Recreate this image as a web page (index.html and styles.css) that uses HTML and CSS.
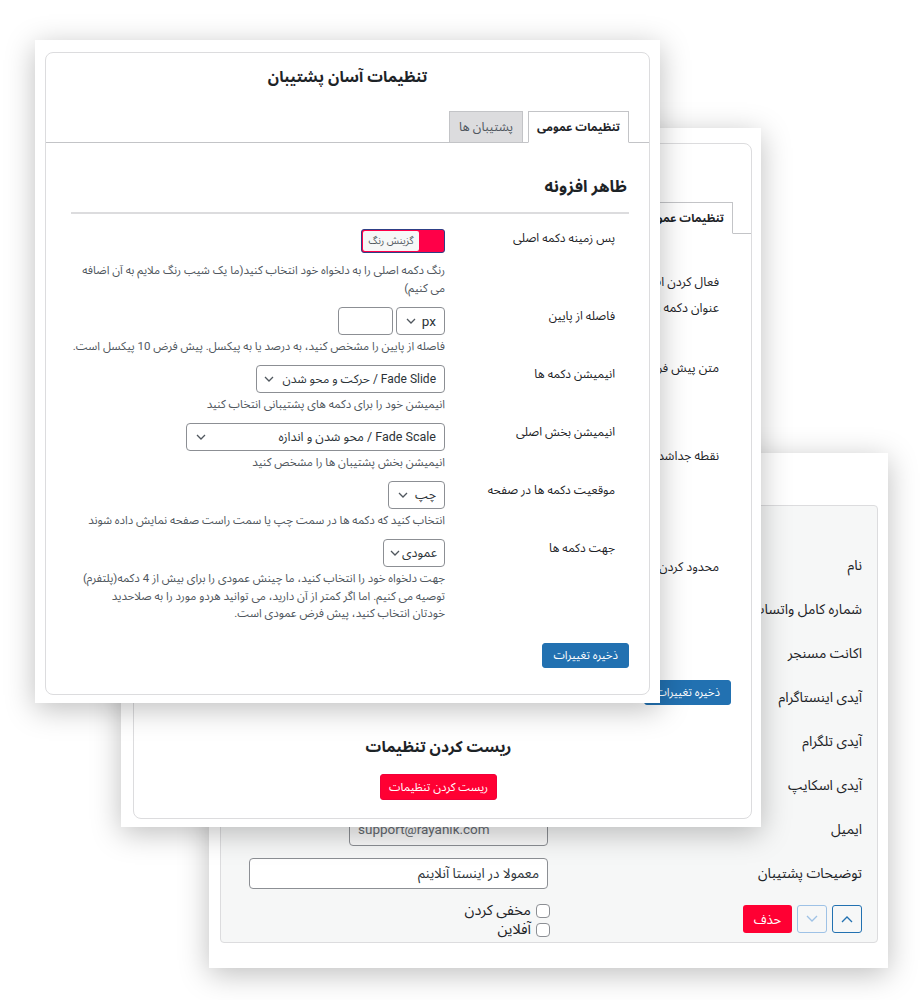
FILE: index.html
```html
<!DOCTYPE html>
<html lang="fa" dir="rtl">
<head>
<meta charset="utf-8">
<title>تنظیمات آسان پشتیبان</title>
<link rel="stylesheet" href="styles.css">
</head>
<body>
<div class="canvas">

  <!-- Window 3: supporters list -->
  <section class="win win3">
    <div class="w3-box">
      <div class="w3-row"><div class="w3-lbl">نام</div><div><input class="w3-in" type="text" value="پشتیبان فروش"></div></div>
      <div class="w3-row"><div class="w3-lbl">شماره کامل واتساپ</div><div><input class="w3-in ltr" type="text" value="989120000000"></div></div>
      <div class="w3-row"><div class="w3-lbl">اکانت مسنجر</div><div><input class="w3-in ltr" type="text" value=""></div></div>
      <div class="w3-row"><div class="w3-lbl">آیدی اینستاگرام</div><div><input class="w3-in ltr" type="text" value="rayanik"></div></div>
      <div class="w3-row"><div class="w3-lbl">آیدی تلگرام</div><div><input class="w3-in ltr" type="text" value="rayanik"></div></div>
      <div class="w3-row"><div class="w3-lbl">آیدی اسکایپ</div><div><input class="w3-in ltr" type="text" value=""></div></div>
      <div class="w3-row"><div class="w3-lbl">ایمیل</div><div><input class="w3-in ltr email" type="text" value="support@rayanik.com"></div></div>
      <div class="w3-row"><div class="w3-lbl">توضیحات پشتیبان</div><div><input class="w3-in wide" type="text" value="معمولا در اینستا آنلاینم"></div></div>
      <div class="w3-last">
        <div class="w3-btns">
          <button class="ibtn up" type="button" aria-label="بالا"><svg width="12" height="8" viewBox="0 0 12 8"><path d="M1 7l5-5 5 5" fill="none" stroke="#2271b1" stroke-width="1.3"/></svg></button>
          <button class="ibtn down" type="button" aria-label="پایین"><svg width="12" height="8" viewBox="0 0 12 8"><path d="M1 1l5 5 5-5" fill="none" stroke="#9ec2e6" stroke-width="1.3"/></svg></button>
          <button class="del" type="button">حذف</button>
        </div>
        <div class="w3-checks">
          <label class="chk"><input type="checkbox"><span>مخفی کردن</span></label>
          <label class="chk"><input type="checkbox"><span>آفلاین</span></label>
        </div>
      </div>
    </div>
  </section>

  <!-- Window 2: general settings + reset -->
  <section class="win win2">
    <div class="box">
      <h1 class="title">تنظیمات آسان پشتیبان</h1>
      <div class="tabs tabs2">
        <div class="tab active">تنظیمات عمومی</div>
        <div class="tab">پشتیبان ها</div>
      </div>
      <div class="w2-form">
        <div class="w2-row h26">فعال کردن افزونه</div>
        <div class="w2-row h60">عنوان دکمه اصلی</div>
        <div class="w2-row h88">متن پیش فرض پیام</div>
        <div class="w2-row h111">نقطه جداشدن موبایل</div>
        <div class="w2-row h122">محدود کردن نمایش</div>
      </div>
      <div class="w2-save"><button class="btn-primary" type="button">ذخیره تغییرات</button></div>
      <div class="reset">
        <h3 class="reset-title">ریست کردن تنظیمات</h3>
        <button class="btn-red" type="button">ریست کردن تنظیمات</button>
      </div>
    </div>
  </section>

  <!-- Window 1: appearance -->
  <section class="win win1">
    <div class="box">
      <h1 class="title">تنظیمات آسان پشتیبان</h1>
      <div class="tabs">
        <div class="tab active">تنظیمات عمومی</div>
        <div class="tab">پشتیبان ها</div>
      </div>
      <div class="body1">
        <h2 class="section">ظاهر افزونه</h2>
        <hr class="sep">

        <div class="row">
          <div class="lbl">پس زمینه دکمه اصلی</div>
          <div class="field">
            <div class="picker"><span>گزینش رنگ</span></div>
            <div class="desc first">رنگ دکمه اصلی را به دلخواه خود انتخاب کنید(ما یک شیب رنگ ملایم به آن اضافه<br>می کنیم)</div>
          </div>
        </div>

        <div class="row">
          <div class="lbl">فاصله از پایین</div>
          <div class="field">
            <div class="inline">
              <div class="sel w49"><span class="ltr-txt">px</span><svg class="chev" width="10" height="6" viewBox="0 0 10 6"><path d="M1 1l4 4 4-4" fill="none" stroke="#50575e" stroke-width="1.3"/></svg></div>
              <input class="num" type="text" value="">
            </div>
            <div class="desc">فاصله از پایین را مشخص کنید، به درصد یا به پیکسل. پیش فرض 10 پیکسل است.</div>
          </div>
        </div>

        <div class="row">
          <div class="lbl">انیمیشن دکمه ها</div>
          <div class="field">
            <div class="sel w189 snug"><span>Fade Slide / حرکت و محو شدن</span><svg class="chev" width="10" height="6" viewBox="0 0 10 6"><path d="M1 1l4 4 4-4" fill="none" stroke="#50575e" stroke-width="1.3"/></svg></div>
            <div class="desc">انیمیشن خود را برای دکمه های پشتیبانی انتخاب کنید</div>
          </div>
        </div>

        <div class="row">
          <div class="lbl">انیمیشن بخش اصلی</div>
          <div class="field">
            <div class="sel w259"><span>Fade Scale / محو شدن و اندازه</span><svg class="chev" width="10" height="6" viewBox="0 0 10 6"><path d="M1 1l4 4 4-4" fill="none" stroke="#50575e" stroke-width="1.3"/></svg></div>
            <div class="desc">انیمیشن بخش پشتیبان ها را مشخص کنید</div>
          </div>
        </div>

        <div class="row">
          <div class="lbl">موقعیت دکمه ها در صفحه</div>
          <div class="field">
            <div class="sel w57"><span>چپ</span><svg class="chev" width="10" height="6" viewBox="0 0 10 6"><path d="M1 1l4 4 4-4" fill="none" stroke="#50575e" stroke-width="1.3"/></svg></div>
            <div class="desc">انتخاب کنید که دکمه ها در سمت چپ یا سمت راست صفحه نمایش داده شوند</div>
          </div>
        </div>

        <div class="row">
          <div class="lbl">جهت دکمه ها</div>
          <div class="field">
            <div class="sel w62 tight"><span>عمودی</span><svg class="chev" width="10" height="6" viewBox="0 0 10 6"><path d="M1 1l4 4 4-4" fill="none" stroke="#50575e" stroke-width="1.3"/></svg></div>
            <div class="desc multi">جهت دلخواه خود را انتخاب کنید، ما چینش عمودی را برای بیش از 4 دکمه(پلتفرم)<br>توصیه می کنیم. اما اگر کمتر از آن دارید، می توانید هردو مورد را به صلاحدید<br>خودتان انتخاب کنید، پیش فرض عمودی است.</div>
          </div>
        </div>

        <div class="save1"><button class="btn-primary" type="button">ذخیره تغییرات</button></div>
      </div>
    </div>
  </section>

</div>
</body>
</html>
```

FILE: styles.css
```css
* { box-sizing: border-box; }

body {
  margin: 0;
  background: #ffffff;
  font-family: Roboto, "Noto Sans Arabic", "DejaVu Sans", sans-serif;
  color: #1d2327;
}

.canvas {
  position: relative;
  width: 920px;
  height: 1000px;
  overflow: hidden;
  direction: rtl;
}

/* Free-floating screenshot windows */
.win {
  position: absolute;
  background: #ffffff;
  box-shadow: 0 6px 28px rgba(0, 0, 0, 0.26);
}

.win1 { left: 35px; top: 40px; width: 625px; height: 663px; padding: 12px 10px 8px 10px; }
.win2 { left: 121px; top: 128px; width: 640px; height: 699px; padding: 15px 9px 8px 12px; }
.win3 { left: 209px; top: 453px; width: 679px; height: 515px; padding: 52px 10px 25px 11px; }

.box {
  height: 100%;
  border: 1px solid #dcdcde;
  border-radius: 8px;
}

.title {
  margin: 0;
  padding-top: 12px;
  text-align: center;
  font-size: 15.5px;
  line-height: 24px;
  font-weight: 700;
  color: #1d2327;
}

/* Tabs */
.tabs {
  display: flex;
  align-items: flex-end;
  gap: 5px;
  margin-top: 22px;
  padding-right: 20px;
  border-bottom: 1px solid #c3c4c7;
}
.tabs2 { padding-right: 18px; }

.tab {
  height: 32px;
  margin-bottom: -1px;
  padding: 0 9px;
  border: 1px solid #c3c4c7;
  background: #dcdcde;
  color: #50575e;
  font-size: 12.5px;
  line-height: 30px;
  font-weight: 400;
}
.tab.active {
  padding: 0 8px;
  background: #ffffff;
  border-bottom-color: #ffffff;
  color: #1d2327;
  font-size: 11.5px;
  font-weight: 700;
}

/* Window 1 body */
.body1 { padding: 0 20px 0 25px; }

.section {
  margin: 31px 0 0;
  padding-right: 2px;
  font-size: 16.5px;
  line-height: 26px;
  font-weight: 700;
}

.sep {
  border: 0;
  height: 2px;
  background: #dcdcde;
  margin: 12px 0 15px;
}

.row {
  display: grid;
  grid-template-columns: 184px 1fr;
  margin-bottom: 10px;
}
.lbl {
  padding-right: 14px;
  font-size: 12px;
  line-height: 18px;
  color: #1d2327;
}
.field { min-width: 0; }

.desc {
  margin-top: 2px;
  font-size: 11.5px;
  line-height: 18px;
  color: #50575e;
  white-space: nowrap;
}
.desc.first { margin-top: 8px; }
.desc.multi { margin-top: 3px; line-height: 17.5px; }

.picker {
  display: flex;
  justify-content: flex-end;
  width: 84px;
  height: 24px;
  border: 1px solid #2e3f86;
  border-radius: 3px;
  background: #ff0048;
  padding: 1px;
}
.picker span {
  width: 56px;
  background: #f6f7f7;
  border-radius: 2px;
  font-size: 10px;
  line-height: 20px;
  text-align: center;
  color: #50575e;
}

.inline { display: flex; gap: 3px; }

.sel {
  display: flex;
  align-items: center;
  justify-content: space-between;
  height: 28px;
  padding: 0 8px 0 9px;
  border: 1px solid #8c8f94;
  border-radius: 4px;
  background: #ffffff;
  font-size: 12.5px;
  color: #2c3338;
  white-space: nowrap;
}
.sel.snug { padding: 0 8px 0 7px; font-size: 12px; }
.sel.tight { justify-content: flex-start; gap: 2px; padding: 0 7px 0 4px; }
.chev { flex: none; }
.ltr-txt { direction: ltr; font-size: 13.5px; }
.w49 { width: 49px; }
.w57 { width: 57px; }
.w62 { width: 62px; }
.w189 { width: 189px; }
.w259 { width: 259px; }

.num {
  width: 55px;
  height: 28px;
  border: 1px solid #8c8f94;
  border-radius: 4px;
  background: #ffffff;
  font: inherit;
  padding: 0 6px;
}

.save1 { margin-top: 20px; }

.btn-primary {
  height: 25px;
  padding: 0 10px;
  border: 1px solid #2271b1;
  border-radius: 3px;
  background: #2271b1;
  color: #ffffff;
  font-family: inherit;
  font-size: 11.5px;
  line-height: 23px;
  white-space: nowrap;
}

/* Window 2 */
.w2-form { padding-right: 32px; padding-top: 39px; }
.w2-row {
  font-size: 12.5px;
  line-height: 18px;
  color: #1d2327;
  white-space: nowrap;
}
.h26 { height: 26px; }
.h60 { height: 60px; }
.h88 { height: 88px; }
.h111 { height: 111px; }
.h122 { height: 122px; }

.w2-save { padding-right: 20px; }

.reset { text-align: center; padding-right: 8px; }
.reset-title {
  margin: 30px 0 0;
  font-size: 15.5px;
  line-height: 24px;
  font-weight: 700;
}
.btn-red {
  margin-top: 15px;
  width: 117px;
  height: 26px;
  padding: 0;
  border: 1px solid #f0003a;
  border-radius: 3px;
  background: #ff0033;
  color: #ffffff;
  font-family: inherit;
  font-size: 11.5px;
  white-space: nowrap;
}

/* Window 3 */
.w3-box {
  height: 100%;
  background: #f6f7f7;
  border: 1px solid #dcdcde;
  border-radius: 4px;
  padding: 37px 15px 0 0;
}
.w3-row {
  display: grid;
  grid-template-columns: 314px 1fr;
  align-items: center;
  height: 44px;
}
.w3-lbl {
  font-size: 14px;
  line-height: 20px;
  color: #1d2327;
  white-space: nowrap;
}
.w3-in {
  width: 199px;
  height: 33px;
  border: 1px solid #8c8f94;
  border-radius: 4px;
  background: #ffffff;
  padding: 0 8px;
  font-family: inherit;
  font-size: 13.5px;
  color: #2c3338;
}
.w3-in.ltr { direction: ltr; text-align: left; }
.w3-in.email { color: #646970; background: #f9f9f9; }
.w3-in.wide { width: 299px; height: 31px; }

.w3-last {
  display: grid;
  grid-template-columns: 314px 1fr;
  padding-top: 6px;
}
.w3-btns { display: flex; gap: 5px; padding-top: 4px; }
.ibtn {
  display: flex;
  align-items: center;
  justify-content: center;
  width: 30px;
  height: 28px;
  padding: 0;
  border: 1px solid #2271b1;
  border-radius: 3px;
  background: #f6f7f7;
}
.ibtn.down { border-color: #9ec2e6; }
.del {
  width: 49px;
  height: 28px;
  border: 0;
  border-radius: 3px;
  background: #ff0033;
  color: #ffffff;
  font-family: inherit;
  font-size: 13px;
}

.w3-checks { display: flex; flex-direction: column; margin-right: -2px; }
.chk {
  display: flex;
  align-items: center;
  gap: 5px;
  font-size: 14.5px;
  line-height: 19px;
  color: #1d2327;
}
.chk input {
  appearance: none;
  -webkit-appearance: none;
  margin: 0;
  width: 14px;
  height: 14px;
  border: 1px solid #8c8f94;
  border-radius: 4px;
  background: #ffffff;
}
```
